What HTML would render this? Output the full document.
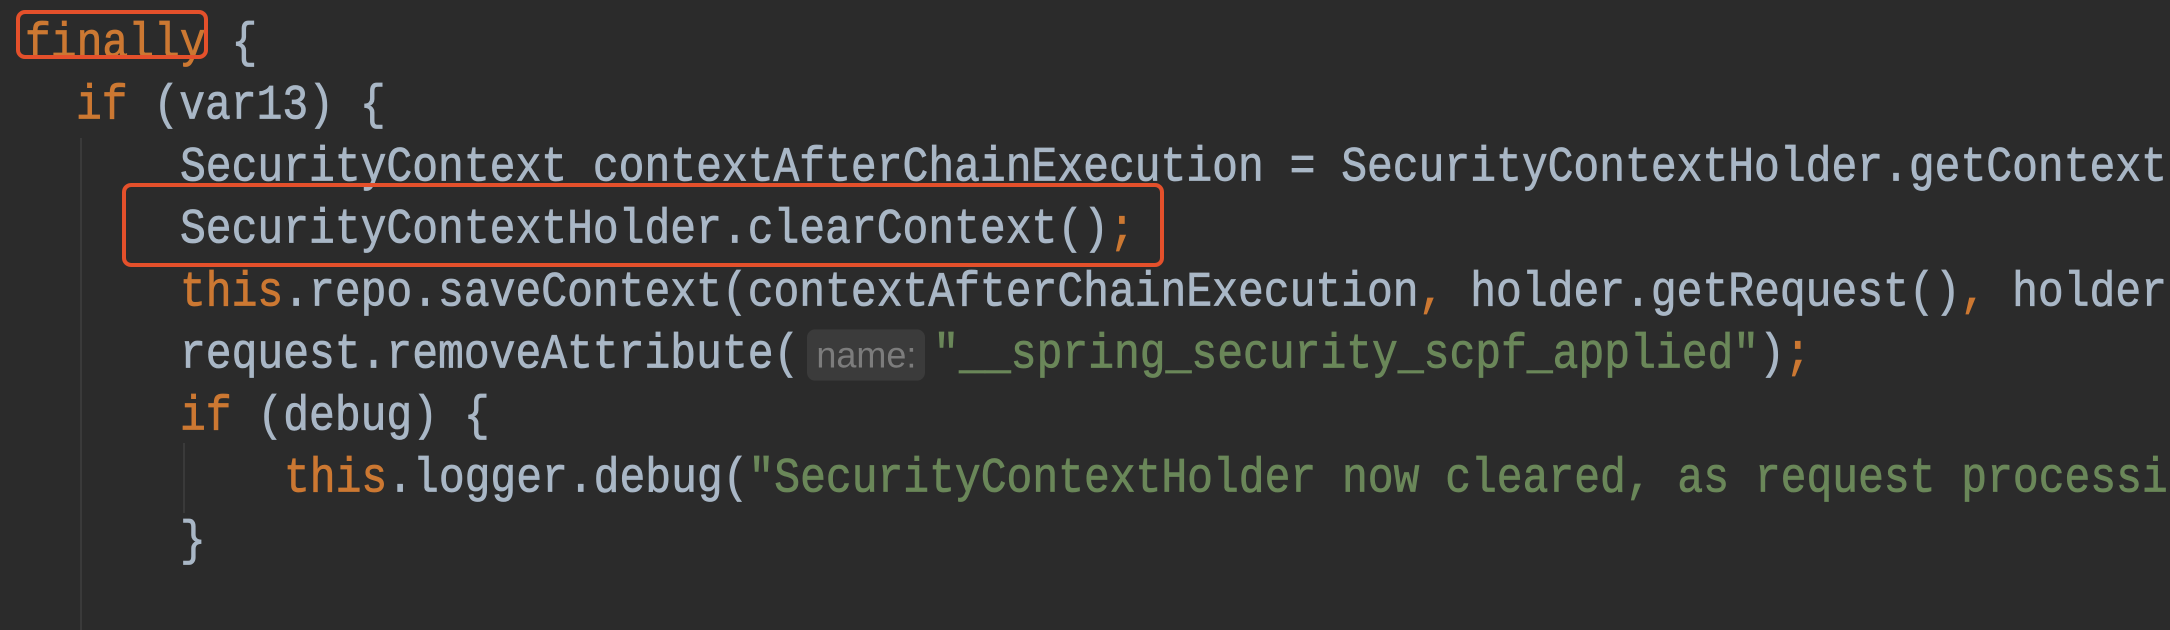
<!DOCTYPE html>
<html><head><meta charset="utf-8"><style>
html,body{margin:0;padding:0;}
body{width:2170px;height:630px;background:#2b2b2b;position:relative;overflow:hidden;font-family:"Liberation Mono","DejaVu Sans Mono",monospace;font-size:43px;color:#a9b7c6;}
.wrap{position:absolute;left:0;top:0;width:2170px;height:630px;overflow:hidden;}
.l{position:absolute;height:62px;line-height:62px;white-space:pre;transform:scaleY(1.14);transform-origin:left center;-webkit-text-stroke:0.7px currentColor;}
.k{color:#cc7832}.s{color:#6a8759}
.box{position:absolute;border:4px solid #e4502b;border-radius:9px;box-sizing:border-box;}
.g{position:absolute;width:2px;background:#3a3a3a;}
.hint{display:inline-block;background:#3b3b3b;color:#7c7c7c;font-family:"Liberation Sans","DejaVu Sans",sans-serif;font-size:36px;border-radius:8px;height:50px;line-height:50px;padding:0 9px;vertical-align:middle;margin:0 8px 0 8px;transform:scaleY(0.9);-webkit-text-stroke:0;}
</style></head><body><div class="wrap">
<div class="g" style="left:80px;top:138px;height:492px"></div>
<div class="g" style="left:183px;top:443px;height:70px"></div>
<div class="l" style="left:25px;top:13px"><span class="k">finally</span> {</div>
<div class="l" style="left:76px;top:75px"><span class="k">if</span> (var13) {</div>
<div class="l" style="left:180px;top:137px">SecurityContext contextAfterChainExecution = SecurityContextHolder.getContext();</div>
<div class="l" style="left:180px;top:199px">SecurityContextHolder.clearContext()<span class="k">;</span></div>
<div class="l" style="left:180px;top:262px"><span class="k">this</span>.repo.saveContext(contextAfterChainExecution<span class="k">,</span> holder.getRequest()<span class="k">,</span> holder.getResponse())<span class="k">;</span></div>
<div class="l" style="left:180px;top:324px">request.removeAttribute(<span class="hint">name:</span><span class="s">"__spring_security_scpf_applied"</span>)<span class="k">;</span></div>
<div class="l" style="left:180px;top:386px"><span class="k">if</span> (debug) {</div>
<div class="l" style="left:284px;top:448px"><span class="k">this</span>.logger.debug(<span class="s">"SecurityContextHolder now cleared, as request processing completed"</span>)<span class="k">;</span></div>
<div class="l" style="left:180px;top:511px">}</div>
<div class="box" style="left:16px;top:10px;width:192px;height:49px"></div>
<div class="box" style="left:122px;top:183px;width:1042px;height:84px"></div>
</div></body></html>
